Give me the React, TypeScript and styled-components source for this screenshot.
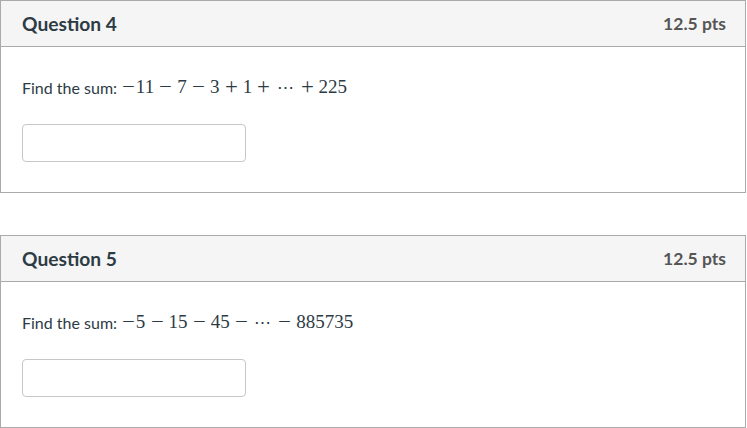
import styled, { createGlobalStyle } from 'styled-components'

const GlobalStyle = createGlobalStyle`
  html, body {
    margin: 0;
    padding: 0;
    background: #ffffff;
  }
  body {
    font-family: Lato, "Open Sans", sans-serif;
    color: #2d3b45;
  }
`

const Page = styled.div`
  width: 746px;
  display: flex;
  flex-direction: column;
  gap: 42px;
`

const Card = styled.section`
  border: 1px solid #aaaaaa;
  background: #ffffff;
`

const Header = styled.div`
  height: 45px;
  display: flex;
  align-items: center;
  justify-content: space-between;
  padding: 0 19px 0 21px;
  background: #f5f5f5;
  border-bottom: 1px solid #aaaaaa;
`

const Title = styled.h2`
  margin: 0;
  font-size: 19.2px;
  font-weight: 700;
  color: #2d3b45;
`

const Points = styled.div`
  font-size: 17.5px;
  font-weight: 700;
  color: #555555;
`

const Body = styled.div`
  display: flex;
  flex-direction: column;
  align-items: flex-start;
  gap: 24px;
  padding: 28px 21px 30px;
`

const Prompt = styled.div`
  height: 24px;
  margin-bottom: 1px;
  display: flex;
  align-items: center;
  font-size: 16px;
  white-space: nowrap;
`

const Math = styled.span`
  font-family: "Liberation Serif", "DejaVu Serif", serif;
  font-size: 19px;
  margin-left: 4px;
  display: inline-flex;
  align-items: baseline;
  color: #2d3b45;
`

const Op = styled.span<{ $unary?: boolean }>`
  display: inline-block;
  width: 0.778em;
  text-align: center;
  margin: ${p => (p.$unary ? '0' : '0 0.222em')};
`

// the serif minus and plus are smaller than the TeX ones, so stretch them
const Glyph = styled.span<{ $scale: string }>`
  display: inline-block;
  transform: ${p => p.$scale};
`

const Dots = styled.span`
  display: inline-block;
  width: 1.172em;
  text-align: center;
  font-family: "DejaVu Serif", serif;
  font-size: 0.9em;
`

const AnswerInput = styled.input`
  width: 224px;
  height: 38px;
  box-sizing: border-box;
  border: 1px solid #c7c7c7;
  border-radius: 4px;
  background: #ffffff;
  font-family: Lato, sans-serif;
  font-size: 16px;
  padding: 0 10px;
`

type Term = { kind: 'num' | 'op' | 'dots' | 'neg'; value?: string }

const questions: { title: string; points: string; terms: Term[] }[] = [
  {
    title: 'Question 4',
    points: '12.5 pts',
    terms: [
      { kind: 'neg', value: '−' },
      { kind: 'num', value: '11' },
      { kind: 'op', value: '−' },
      { kind: 'num', value: '7' },
      { kind: 'op', value: '−' },
      { kind: 'num', value: '3' },
      { kind: 'op', value: '+' },
      { kind: 'num', value: '1' },
      { kind: 'op', value: '+' },
      { kind: 'dots' },
      { kind: 'op', value: '+' },
      { kind: 'num', value: '225' }
    ]
  },
  {
    title: 'Question 5',
    points: '12.5 pts',
    terms: [
      { kind: 'neg', value: '−' },
      { kind: 'num', value: '5' },
      { kind: 'op', value: '−' },
      { kind: 'num', value: '15' },
      { kind: 'op', value: '−' },
      { kind: 'num', value: '45' },
      { kind: 'op', value: '−' },
      { kind: 'dots' },
      { kind: 'op', value: '−' },
      { kind: 'num', value: '885735' }
    ]
  }
]

function renderTerm (t: Term, i: number) {
  if (t.kind === 'dots') return <Dots key={i}>⋯</Dots>
  if (t.kind === 'num') return <span key={i}>{t.value}</span>
  const scale = t.value === '−' ? 'scaleX(1.2)' : 'scale(1.2)'
  return (
    <Op key={i} $unary={t.kind === 'neg'}>
      <Glyph $scale={scale}>{t.value}</Glyph>
    </Op>
  )
}

export default function App () {
  return (
    <>
      <GlobalStyle />
      <Page>
        {questions.map(q => (
          <Card key={q.title}>
            <Header>
              <Title>{q.title}</Title>
              <Points>{q.points}</Points>
            </Header>
            <Body>
              <Prompt>
                Find the sum:
                <Math>{q.terms.map(renderTerm)}</Math>
              </Prompt>
              <AnswerInput type='text' aria-label={`${q.title} answer`} />
            </Body>
          </Card>
        ))}
      </Page>
    </>
  )
}
